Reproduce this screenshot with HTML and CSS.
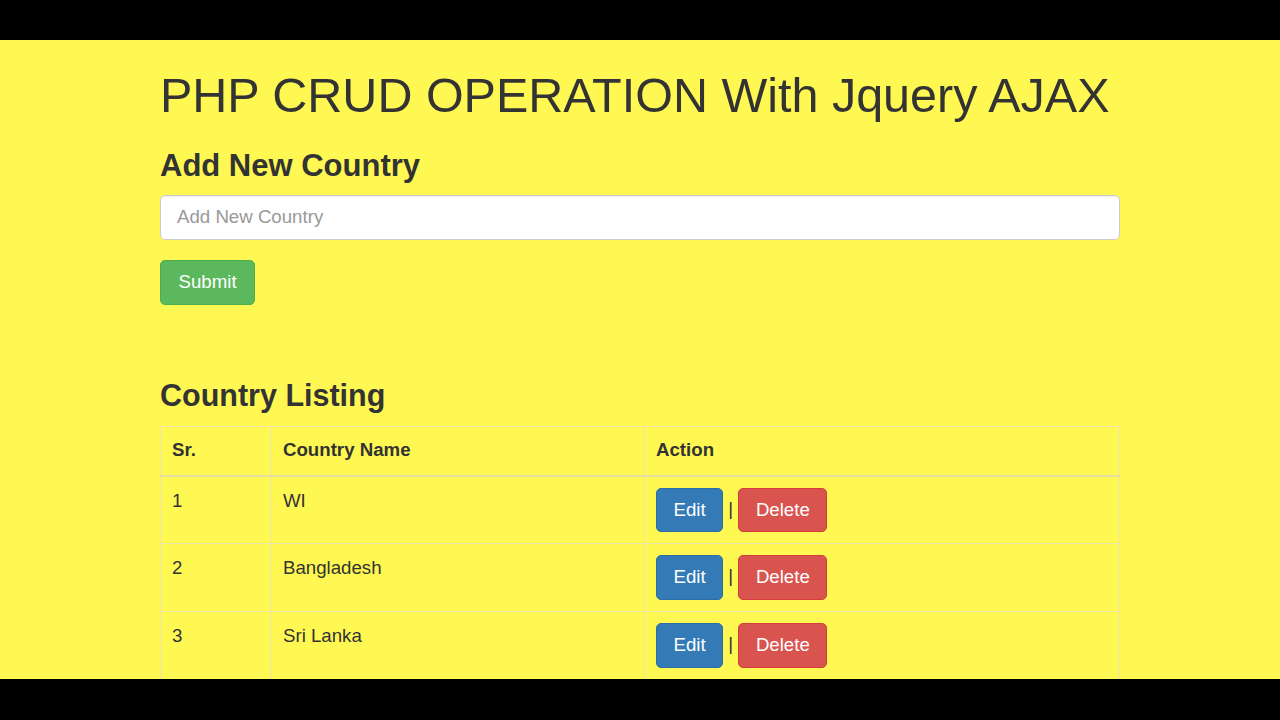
FILE: index.html
```html
<!DOCTYPE html>
<html lang="en">
<head>
<meta charset="utf-8">
<title>PHP CRUD OPERATION With Jquery AJAX</title>
<link rel="stylesheet" href="styles.css">
</head>
<body>
<div class="screen">
  <div class="container">
    <h1 class="page-title">PHP CRUD OPERATION With Jquery AJAX</h1>

    <h3 class="section-title">Add New Country</h3>
    <form class="add-form" onsubmit="return false;">
      <div class="form-group">
        <input class="form-control" type="text" placeholder="Add New Country">
      </div>
      <button class="btn btn-success" type="submit">Submit</button>
    </form>

    <h3 class="section-title listing-title">Country Listing</h3>
    <table class="table-bordered">
      <thead>
        <tr>
          <th class="col-sr">Sr.</th>
          <th class="col-name">Country Name</th>
          <th>Action</th>
        </tr>
      </thead>
      <tbody>
        <tr>
          <td>1</td>
          <td>WI</td>
          <td><button class="btn btn-primary">Edit</button> | <button class="btn btn-danger">Delete</button></td>
        </tr>
        <tr>
          <td>2</td>
          <td>Bangladesh</td>
          <td><button class="btn btn-primary">Edit</button> | <button class="btn btn-danger">Delete</button></td>
        </tr>
        <tr>
          <td>3</td>
          <td>Sri Lanka</td>
          <td><button class="btn btn-primary">Edit</button> | <button class="btn btn-danger">Delete</button></td>
        </tr>
      </tbody>
    </table>
  </div>
</div>
</body>
</html>
```
FILE: styles.css
```css
html, body {
  margin: 0;
  padding: 0;
  background: #000;
}

body {
  font-family: "Liberation Sans", Arial, Helvetica, sans-serif;
  font-size: 18.67px;
  line-height: 1.42857;
  color: #333;
}

.screen {
  margin-top: 40px;
  height: 639px;
  background: #fff852;
  overflow: hidden;
}

.container {
  width: 960px;
  margin: 0 auto;
}

.page-title {
  font-size: 48.5px;
  font-weight: normal;
  line-height: 1.1;
  margin: 29px 0 13px;
  color: #333;
}

.section-title {
  font-size: 31px;
  font-weight: bold;
  line-height: 1.1;
  margin: 27px 0 11.5px;
  color: #333;
}

.listing-title {
  font-size: 30.5px;
  margin-top: 74px;
  margin-bottom: 13px;
}

.add-form {
  margin: 0;
}

.form-group {
  margin-bottom: 20.5px;
}

.form-control {
  display: block;
  box-sizing: border-box;
  width: 100%;
  height: 45px;
  padding: 8px 16px;
  font-family: inherit;
  font-size: 18.67px;
  color: #555;
  background: #fff;
  border: 1px solid #ccc;
  border-radius: 5px;
  box-shadow: inset 0 1px 1px rgba(0, 0, 0, 0.075);
  outline: none;
}

.form-control::placeholder {
  color: #999;
}

.btn {
  display: inline-block;
  box-sizing: border-box;
  padding: 8px 16.5px;
  font-family: inherit;
  font-size: 18.67px;
  line-height: 1.42857;
  color: #fff;
  border: 1.33px solid transparent;
  border-radius: 5px;
  vertical-align: middle;
  cursor: pointer;
}

.btn-success {
  background: #5cb85c;
  border-color: #4cae4c;
  padding-left: 17.5px;
  padding-right: 17.5px;
}

.btn-primary {
  background: #337ab7;
  border-color: #2e6da4;
}

.btn-danger {
  background: #d9534f;
  border-color: #d43f3a;
}

.table-bordered {
  width: 100%;
  border-collapse: collapse;
  border: 1px solid #ebe7ad;
}

.table-bordered th,
.table-bordered td {
  padding: 10.67px 11px 10.67px 11px;
  text-align: left;
  vertical-align: top;
  border: 1px solid #ebe7ad;
  line-height: 1.42857;
}

.table-bordered td {
  padding-top: 11px;
  padding-bottom: 11px;
}

.table-bordered th {
  font-weight: bold;
  border-bottom: 2px solid #e2dea4;
}

.col-sr {
  width: 88px;
}

.col-name {
  width: 350px;
}
```
